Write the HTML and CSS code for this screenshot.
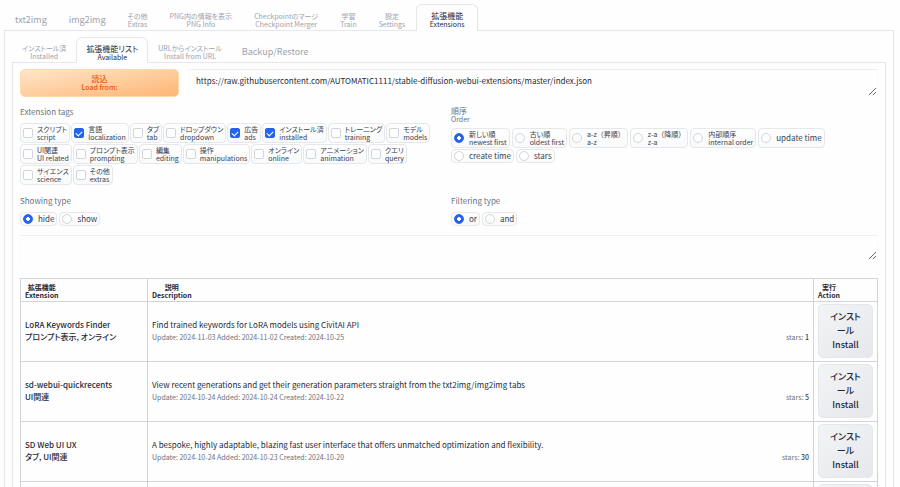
FILE: index.html
```html
<!DOCTYPE html>
<html lang="ja">
<head>
    <meta charset="UTF-8">
    <meta name="viewport" content="width=device-width, initial-scale=1.0">
    <title>Stable Diffusion</title>
    <link rel="stylesheet" href="styles.css">
</head>
<body>
    <!-- メインタブ -->
    <nav class="tabs">
        <button type="button">txt2img</button>
        <button type="button">img2img</button>
        <button type="button" class="bilingual">その他<br>Extras</button>
        <button type="button" class="bilingual">PNG内の情報を表示<br>PNG Info</button>
        <button type="button" class="bilingual">Checkpointのマージ<br>Checkpoint Merger</button>
        <button type="button" class="bilingual">学習<br>Train</button>
        <button type="button" class="bilingual">設定<br>Settings</button>
        <button type="button" class="bilingual selected">拡張機能<br>Extensions</button>
    </nav>
    <main class="panel">
        <!-- 拡張機能のサブタブ -->
        <nav class="tabs sub-tabs">
            <button type="button" class="bilingual">インストール済<br>Installed</button>
            <button type="button" class="bilingual selected">拡張機能リスト<br>Available</button>
            <button type="button" class="bilingual">URLからインストール<br>Install from URL</button>
            <button type="button">Backup/Restore</button>
        </nav>
        <section class="panel">
            <div class="load-row">
                <button type="button" class="load-button">読込<br>Load from:</button>
                <textarea aria-label="Extension index URL">https://raw.githubusercontent.com/AUTOMATIC1111/stable-diffusion-webui-extensions/master/index.json</textarea>
            </div>

            <div class="filters">
                <fieldset class="tags">
                    <legend>Extension tags</legend>
                    <div class="options">
                        <label><input type="checkbox"><span class="bilingual">スクリプト<br>script</span></label>
                        <label><input type="checkbox" checked><span class="bilingual">言語<br>localization</span></label>
                        <label><input type="checkbox"><span class="bilingual">タブ<br>tab</span></label>
                        <label><input type="checkbox"><span class="bilingual">ドロップダウン<br>dropdown</span></label>
                        <label><input type="checkbox" checked><span class="bilingual">広告<br>ads</span></label>
                        <label><input type="checkbox" checked><span class="bilingual">インストール済<br>installed</span></label>
                        <label><input type="checkbox"><span class="bilingual">トレーニング<br>training</span></label>
                        <label><input type="checkbox"><span class="bilingual">モデル<br>models</span></label>
                        <label><input type="checkbox"><span class="bilingual">UI関連<br>UI related</span></label>
                        <label><input type="checkbox"><span class="bilingual">プロンプト表示<br>prompting</span></label>
                        <label><input type="checkbox"><span class="bilingual">編集<br>editing</span></label>
                        <label><input type="checkbox"><span class="bilingual">操作<br>manipulations</span></label>
                        <label><input type="checkbox"><span class="bilingual">オンライン<br>online</span></label>
                        <label><input type="checkbox"><span class="bilingual">アニメーション<br>animation</span></label>
                        <label><input type="checkbox"><span class="bilingual">クエリ<br>query</span></label>
                        <label><input type="checkbox"><span class="bilingual">サイエンス<br>science</span></label>
                        <label><input type="checkbox"><span class="bilingual">その他<br>extras</span></label>
                    </div>
                </fieldset>
                <fieldset>
                    <legend class="bilingual">順序<br>Order</legend>
                    <div class="options">
                        <label><input type="radio" name="order" checked><span class="bilingual">新しい順<br>newest first</span></label>
                        <label><input type="radio" name="order"><span class="bilingual">古い順<br>oldest first</span></label>
                        <label><input type="radio" name="order"><span class="bilingual full-width">a-z（昇順）<br>a-z</span></label>
                        <label><input type="radio" name="order"><span class="bilingual full-width">z-a（降順）<br>z-a</span></label>
                        <label><input type="radio" name="order"><span class="bilingual">内部順序<br>internal order</span></label>
                        <label><input type="radio" name="order"><span>update time</span></label>
                        <label><input type="radio" name="order"><span>create time</span></label>
                        <label><input type="radio" name="order"><span>stars</span></label>
                    </div>
                </fieldset>
                <fieldset>
                    <legend>Showing type</legend>
                    <div class="options">
                        <label><input type="radio" name="showing" checked><span>hide</span></label>
                        <label><input type="radio" name="showing"><span>show</span></label>
                    </div>
                </fieldset>
                <fieldset>
                    <legend>Filtering type</legend>
                    <div class="options">
                        <label><input type="radio" name="filtering" checked><span>or</span></label>
                        <label><input type="radio" name="filtering"><span>and</span></label>
                    </div>
                </fieldset>
            </div>

            <textarea class="search-box" aria-label="Search"></textarea>

            <!-- 拡張機能の一覧 -->
            <table>
                <thead>
                    <tr>
                        <th class="col-name"><span class="heading">拡張機能<br>Extension</span></th>
                        <th><span class="heading">説明<br>Description</span></th>
                        <th class="col-action"><span class="heading">実行<br>Action</span></th>
                    </tr>
                </thead>
                <tbody>
                    <tr>
                        <td><a href="#">LoRA Keywords Finder</a><div class="tag-names">プロンプト表示, オンライン</div></td>
                        <td>Find trained keywords for LoRA models using CivitAI API<div class="info"><span>Update: 2024-11-03 Added: 2024-11-02 Created: 2024-10-25</span><span>stars: <b>1</b></span></div></td>
                        <td><button type="button" class="install-button">インストール<br>Install</button></td>
                    </tr>
                    <tr>
                        <td><a href="#">sd-webui-quickrecents</a><div class="tag-names">UI関連</div></td>
                        <td>View recent generations and get their generation parameters straight from the txt2img/img2img tabs<div class="info"><span>Update: 2024-10-24 Added: 2024-10-24 Created: 2024-10-22</span><span>stars: <b>5</b></span></div></td>
                        <td><button type="button" class="install-button">インストール<br>Install</button></td>
                    </tr>
                    <tr>
                        <td><a href="#">SD Web UI UX</a><div class="tag-names">タブ, UI関連</div></td>
                        <td>A bespoke, highly adaptable, blazing fast user interface that offers unmatched optimization and flexibility.<div class="info"><span>Update: 2024-10-24 Added: 2024-10-23 Created: 2024-10-20</span><span>stars: <b>30</b></span></div></td>
                        <td><button type="button" class="install-button">インストール<br>Install</button></td>
                    </tr>
                    <tr>
                        <td></td>
                        <td></td>
                        <td><button type="button" class="install-button">インストール<br>Install</button></td>
                    </tr>
                </tbody>
            </table>
        </section>
    </main>
</body>
</html>
```
FILE: styles.css
```css
* {
    box-sizing: border-box;
}

body {
    margin: 0;
    padding: 4px 6px 0 4px;
    background: #fefefe;
    color: #1f2937;
    font-family: "Noto Sans CJK JP", "Noto Sans", sans-serif;
    font-size: 8px;
    line-height: 12px;
    font-feature-settings: "palt"; /* かなを詰めて表示 */
}

button,
textarea {
    font: inherit;
    font-feature-settings: inherit;
    color: inherit;
}

button {
    cursor: pointer;
}

/* タブ */
.tabs {
    display: flex;
    height: 26px;
}

.tabs button {
    padding: 4px 10px 0;
    border: 1px solid transparent;
    border-bottom: 0;
    border-radius: 6px 6px 0 0;
    background: none;
    color: #9ca3af;
    font-size: 9px;
    white-space: nowrap;
}

.tabs .bilingual {
    font-size: 7px;
    line-height: 8px;
}

.tabs .selected {
    margin-bottom: -1px;
    border-color: #e5e7eb;
    background: #fefefe;
    color: #1f2937;
    z-index: 1;
}

.panel {
    border: 1px solid #e5e7eb;
    padding: 6px 7px 0;
}

.sub-tabs {
    height: 25px;
}

.sub-tabs button {
    padding: 4px 9px 0;
}

/* 日本語の行だけ少し大きくする */
.tabs .selected::first-line,
legend.bilingual::first-line,
.load-button::first-line {
    font-size: 8px;
}

/* 読込ボタンとURL */
.load-row {
    display: grid;
    grid-template-columns: 3fr 13fr;
    gap: 10px;
}

.load-button {
    padding: 0;
    border: 1px solid #fed7aa;
    border-radius: 5px;
    background: linear-gradient(to bottom right, #ffe6c9, #fdb574);
    color: #ea580c;
    font-size: 7px;
    font-weight: 500;
    line-height: 8px;
}

textarea {
    display: block;
    width: 100%;
    height: 28px;
    border: 1px solid #f9fafb;
    border-top-color: #eeeff1;
    border-bottom-color: transparent;
    padding: 5px 6px;
    background: #fefefe;
    overflow: hidden;
}

.search-box {
    height: 26px;
    margin-top: 9px;
}

/* 絞り込み条件 */
.filters {
    display: grid;
    grid-template-columns: 1fr 1fr;
    gap: 10px 4px;
    margin-top: 9px;
}

fieldset {
    min-width: 0;
    margin: 0;
    padding: 0;
    border: 0;
}

legend {
    margin-bottom: 5px;
    padding: 0;
    color: #6b7280;
}

legend.bilingual {
    padding-top: 1px;
}

.bilingual {
    font-size: 7px;
    line-height: 8px;
}

.full-width {
    font-feature-settings: normal;
}

.options {
    display: flex;
    flex-wrap: wrap;
    gap: 1px 2px;
}

.options label {
    display: flex;
    align-items: center;
    gap: 5px;
    padding: 0 2px;
    border: 1px solid #e5e7eb;
    border-radius: 4px;
    background: linear-gradient(#fefefe, #f9fafb);
    color: #374151;
    white-space: nowrap;
    cursor: pointer;
}

.options label .bilingual {
    padding: 1px 0;
}

.tags .options {
    gap: 1px;
}

.tags label {
    gap: 4px;
}

.options input {
    appearance: none;
    flex: none;
    width: 10px;
    height: 10px;
    margin: 0;
    border: 1px solid #d1d5db;
    border-radius: 2px;
    background: #fefefe;
}

.options input[type="radio"] {
    border-radius: 50%;
}

.options input:checked {
    border-color: #2563eb;
    background: #2563eb;
}

.options input[type="radio"]:checked {
    background: radial-gradient(circle, #fff 2px, #2563eb 2px);
}

.options input[type="checkbox"]:checked::before {
    content: "";
    display: block;
    width: 5px;
    height: 3px;
    margin: 2px auto 0;
    border: solid #fff;
    border-width: 0 0 1px 1px;
    transform: rotate(-45deg);
}

/* 一覧テーブル */
table {
    width: 100%;
    margin-top: 17px;
    border-collapse: collapse;
    table-layout: fixed;
}

th,
td {
    padding: 2px 4px 3px;
    border: 1px solid #d1d5db;
    text-align: left;
}

th {
    padding: 4px 4px 2px;
    font-size: 7px;
    font-weight: 700;
    line-height: 8px;
}

.heading {
    display: inline-block;
    text-align: center;
    vertical-align: top;
}

.col-name {
    width: 127px;
}

.col-action {
    width: 64px;
}

td a {
    color: inherit;
    font-weight: 500;
    text-decoration: none;
}

.tag-names {
    font-weight: 500;
}

.info {
    display: flex;
    justify-content: space-between;
    color: #6b7280;
    font-size: 7px;
}

.info b {
    color: #374151;
    font-weight: 500;
}

.install-button {
    display: block;
    width: 100%;
    padding: 5px 10px;
    border: 1px solid #e5e7eb;
    border-radius: 5px;
    background: linear-gradient(to bottom right, #f3f4f6, #e5e7eb);
    font-size: 9px;
    font-weight: 500;
    line-height: 14px;
    line-break: loose;
}
```
